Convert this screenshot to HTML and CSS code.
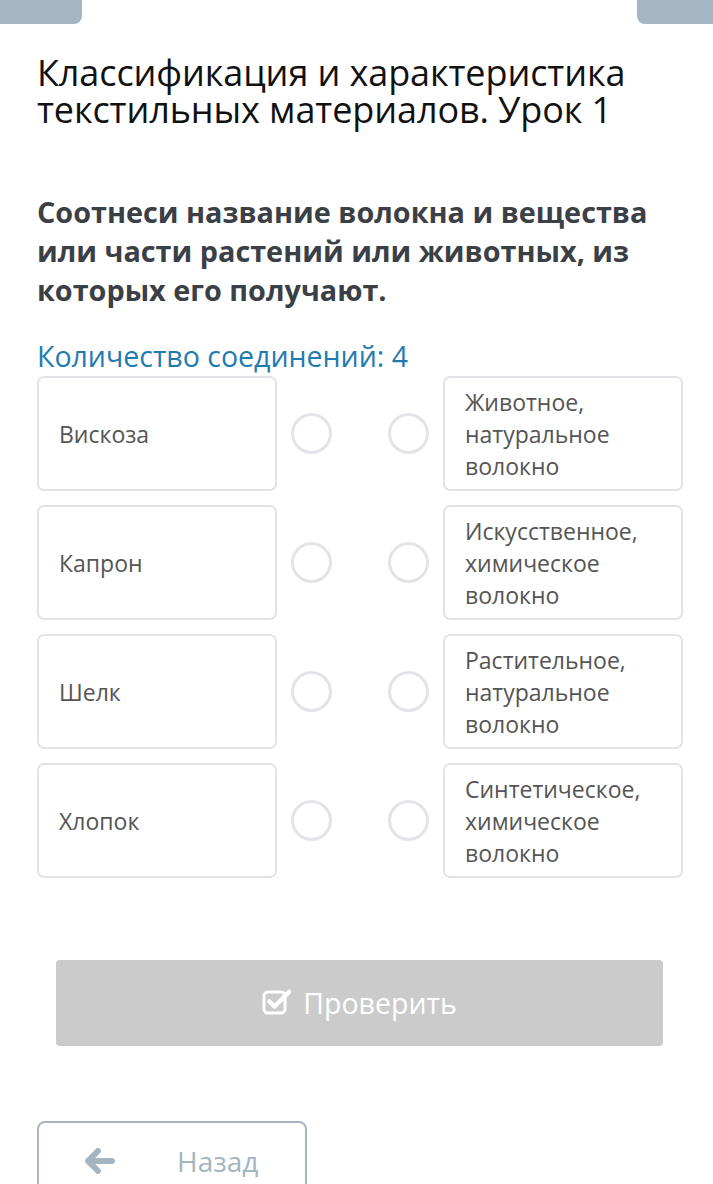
FILE: index.html
```html
<!DOCTYPE html>
<html lang="ru">
<head>
	<meta charset="UTF-8">
	<title>Классификация и характеристика текстильных материалов</title>
	<meta name="viewport" content="width=device-width,initial-scale=1"/>
	<link rel="stylesheet" href="styles.css">
</head>
<body>
	<div class="tabs">
		<div class="tab tab_left"></div>
		<div class="tab tab_right"></div>
	</div>
	<div class="page">
		<h1 class="title">Классификация и характеристика текстильных материалов. Урок 1</h1>
		<p class="question">Соотнеси название волокна и вещества или части растений или животных, из которых его получают.</p>
		<p class="count">Количество соединений: 4</p>

		<div class="match">
			<div class="row">
				<div class="card">Вискоза</div>
				<span class="dot"></span>
				<span class="dot"></span>
				<div class="card">Животное, натуральное волокно</div>
			</div>
			<div class="row">
				<div class="card">Капрон</div>
				<span class="dot"></span>
				<span class="dot"></span>
				<div class="card">Искусственное, химическое волокно</div>
			</div>
			<div class="row">
				<div class="card">Шелк</div>
				<span class="dot"></span>
				<span class="dot"></span>
				<div class="card">Растительное, натуральное волокно</div>
			</div>
			<div class="row">
				<div class="card">Хлопок</div>
				<span class="dot"></span>
				<span class="dot"></span>
				<div class="card">Синтетическое, химическое волокно</div>
			</div>
		</div>

		<button class="check_btn">
			<svg class="check_icon" width="31" height="28" viewBox="0 0 31 28">
				<rect x="2" y="5" width="21" height="21" rx="4" fill="none" stroke="#fff" stroke-width="3"/>
				<path d="M7.5 14.5 L12.5 19.5 L27 5" fill="none" stroke="#fff" stroke-width="4.5" stroke-linecap="round" stroke-linejoin="round"/>
			</svg>
			Проверить
		</button>

		<button class="back_btn">
			<svg class="back_icon" width="30" height="26" viewBox="0 0 30 26">
				<path d="M13 3 L3 13 L13 23 M4 13 H27" fill="none" stroke="#a4b4c0" stroke-width="6" stroke-linecap="round" stroke-linejoin="round"/>
			</svg>
			<span>Назад</span>
		</button>
	</div>
</body>
</html>
```

FILE: styles.css
```css
body{
	margin: 0;
	font-family: "Open Sans", "Noto Sans", sans-serif;
	background: #fff;
	color: #555;
	overflow: hidden;
}
.tabs{
	display: flex;
	justify-content: space-between;
}
.tab{
	height: 24px;
	background: #a4b6c3;
}
.tab_left{
	width: 82px;
	border-radius: 0 0 8px 0;
}
.tab_right{
	width: 76px;
	border-radius: 0 0 0 8px;
}
.page{
	padding: 0 30px 0 37px;
}
.title{
	margin: 30px 0 0;
	font-size: 36px;
	font-weight: 400;
	line-height: 37px;
	letter-spacing: -0.1px;
	color: #111;
}
.question{
	margin: 64px 0 0;
	font-size: 28.8px;
	font-weight: 700;
	line-height: 39px;
	color: #3b4046;
}
.count{
	margin: 28px 0 0;
	font-size: 28.5px;
	line-height: 38px;
	color: #1f7bb0;
}
.match{
	display: flex;
	flex-direction: column;
	gap: 14px;
	margin-top: 1px;
}
.row{
	display: flex;
	align-items: center;
	height: 115px;
}
.card{
	box-sizing: border-box;
	width: 240px;
	height: 115px;
	border: 2px solid #e1e4e6;
	border-radius: 7px;
	padding: 0 20px;
	display: flex;
	align-items: center;
	font-size: 23px;
	line-height: 32px;
	color: #555;
}
.dot{
	box-sizing: border-box;
	width: 41px;
	height: 41px;
	border: 3px solid #e2e4e7;
	border-radius: 50%;
}
.row .dot:nth-child(2){
	margin-left: 14px;
}
.row .dot:nth-child(3){
	margin-left: 56px;
	margin-right: 14px;
}
.check_btn{
	display: flex;
	align-items: center;
	justify-content: center;
	gap: 10px;
	width: 607px;
	height: 86px;
	margin: 82px 0 0 19px;
	border: none;
	border-radius: 4px;
	background: #cbcbcb;
	color: #fff;
	font-family: inherit;
	font-size: 28.5px;
}
.check_icon{
	margin-top: -4px;
}
.back_btn{
	display: flex;
	align-items: center;
	width: 270px;
	height: 80px;
	margin-top: 75px;
	padding: 0 0 0 46px;
	border: 2px solid #a7b6c1;
	border-radius: 8px;
	background: #fff;
	color: #a4b4c0;
	font-family: inherit;
	font-size: 28px;
}
.back_btn span{
	margin-left: 62px;
}
```
